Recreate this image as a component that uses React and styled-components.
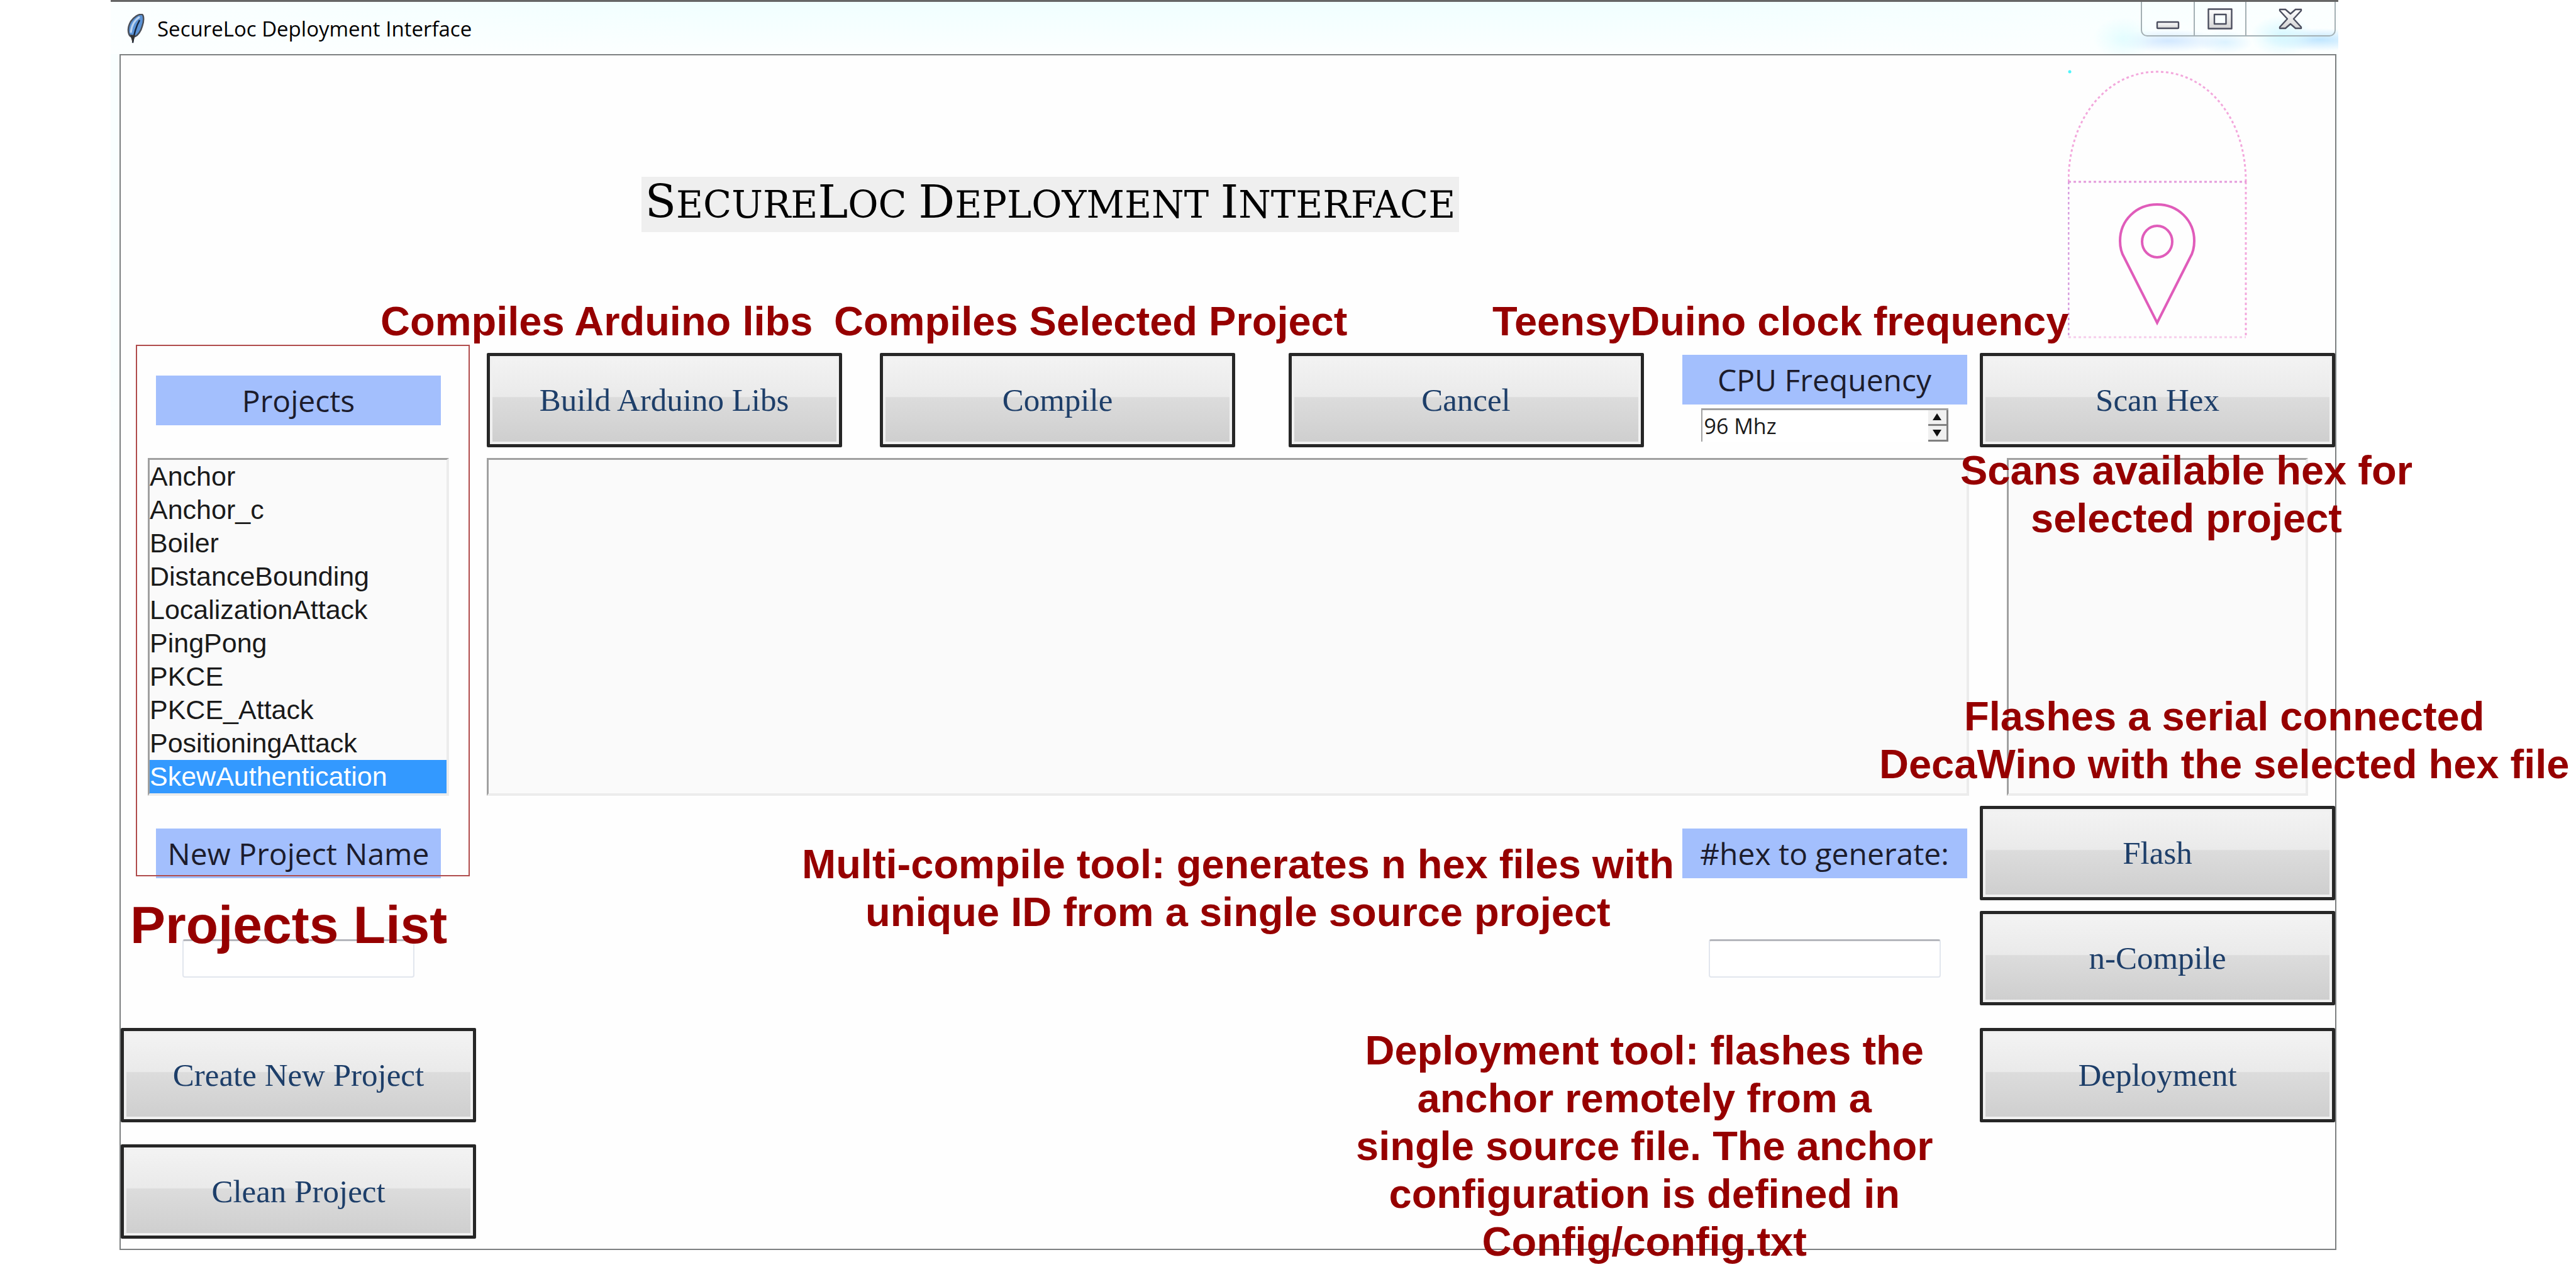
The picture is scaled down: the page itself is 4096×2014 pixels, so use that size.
import React, { useState } from "react";
import styled, { createGlobalStyle } from "styled-components";

const GlobalStyle = createGlobalStyle`
  *, *::before, *::after { box-sizing: border-box; }
  body { margin: 0; background: #fff; font-family: "Liberation Sans", Arial, sans-serif; }
  button, input, select, textarea { margin: 0; font: inherit; }
`;

const Page = styled.main`
  min-height: 100vh;
  padding: 0 378px 0 176px;
`;

const Window = styled.section`
  padding: 0 3px 0 14px;
  border-top: 3px solid #666;
  background: linear-gradient(to bottom, #f9ffff 0, #f9ffff 560px, #fff 860px);
`;

const TitleBar = styled.header`
  display: flex;
  align-items: flex-start;
  justify-content: space-between;
  height: 83px;
  margin: 0 -3px 0 -14px;
  padding: 0 4px 0 26px;
  background:
    radial-gradient(ellipse 48px 34px at calc(100% - 342px) 58px, #e4fdff 0, transparent 100%),
    radial-gradient(ellipse 90px 18px at calc(100% - 270px) 62px, #d2e8ff 0, transparent 100%),
    radial-gradient(ellipse 44px 18px at calc(100% - 180px) 64px, #dcf2ff 0, transparent 100%),
    radial-gradient(ellipse 50px 32px at calc(100% - 90px) 54px, #d6f8ff 0, transparent 100%),
    radial-gradient(ellipse 90px 18px at calc(100% - 30px) 60px, #c0e6ff 0, transparent 100%),
    linear-gradient(to bottom, transparent 0, #fcffff 100%),
    linear-gradient(to right, #fbffff 0, #f0ffff 26%, #f0ffff 70%, #fbffff 100%);
`;

const AppName = styled.div`
  display: flex;
  align-items: center;
  gap: 20px;
  padding-top: 18px;
  font: 33px/50px "Open Sans", "Noto Sans", sans-serif;
  color: #000;
`;

const CaptionButtons = styled.div`
  display: flex;
  height: 55px;
  border: 2px solid #a4b0b4;
  border-top: 0;
  border-radius: 0 0 10px 10px;
`;

const CaptionButton = styled.button`
  display: flex;
  align-items: center;
  justify-content: center;
  width: ${(p) => p.$width}px;
  padding: 0;
  border: 0;
  background: transparent;

  & + & { border-left: 2px solid #a4b0b4; }
`;

const Client = styled.div`
  display: grid;
  grid-template-columns: 565px 598fr 653fr 646fr 494fr 565px;
  grid-template-rows: 473px 150px 570px 150px 184px 188px 182px;
  border: 2px solid #7c7f80;
  background: #fefefe;
`;

const Cell = styled.div`
  position: relative;
  grid-column: ${(p) => p.$col};
  grid-row: ${(p) => p.$row};
  display: flex;
  flex-direction: column;
  align-items: center;
  justify-content: ${(p) => p.$justify || "center"};
  padding: ${(p) => p.$pad || "0"};
`;

const Title = styled.h1`
  margin: 0;
  padding: 0 6px;
  background: #efefef;
  color: #000;
  font: 400 59px/86px "DejaVu Serif", serif;
  text-transform: uppercase;
  white-space: nowrap;
`;

const Initial = styled.span`
  font-size: 72px;
  line-height: 80px;
`;

const ToolButton = styled.button`
  width: 565px;
  height: 150px;
  padding: 0;
  border: 5px solid #262626;
  border-radius: 2px;
  background: linear-gradient(to bottom, #f3f3f3 0, #eaeaea 46%, #dcdcdc 47%, #cecece 100%);
  box-shadow: inset 0 0 0 4px #f0f0f0;
  color: #1d3e69;
  font: 51px/60px "Liberation Serif", "Times New Roman", serif;
`;

const Caption = styled.label`
  display: block;
  width: 453px;
  height: 79px;
  background: #a3bffd;
  color: #1c1c2c;
  font: 400 48px/79px "Open Sans", "Noto Sans", sans-serif;
  text-align: center;
  white-space: nowrap;
`;

const sunken = `
  border: 4px solid;
  border-color: #a0a0a0 #ececec #ececec #a0a0a0;
  border-top-width: 3px;
  border-left-width: 3px;
  border-radius: 0;
  background: #fafafa;
  outline: 0;
`;

const ListBox = styled.select`
  appearance: none;
  width: 479px;
  height: 537px;
  padding: 0;
  overflow: hidden;
  ${sunken}
  color: #1a1a1a;
  font-size: 43px;
  line-height: 51px;

  option {
    height: 53px;
    min-height: 53px;
    padding: 2px 0 0;
    line-height: 51px;
  }
  option:checked {
    background: #3399ff linear-gradient(#3399ff, #3399ff);
    color: #fff;
    -webkit-text-fill-color: #fff;
  }
`;

const Output = styled.textarea`
  width: 100%;
  height: 537px;
  padding: 8px;
  resize: none;
  ${sunken}
`;

const Entry = styled.input`
  width: 369px;
  height: 61px;
  padding: 0 8px;
  border: 2px solid #e2e6ee;
  border-top: 3px solid #b4b6bc;
  border-radius: 4px;
  background: #fff;
  outline: 0;
  font-size: 36px;
`;

const SpinBox = styled.div`
  display: flex;
  width: 393px;
  height: 53px;
  margin-top: 6px;
  border-top: 3px solid #a0a0a0;
  border-left: 2px solid #a0a0a0;
  background: #fff;
`;

const SpinInput = styled.input`
  flex: 1;
  min-width: 0;
  padding: 0 0 0 3px;
  border: 0;
  outline: 0;
  background: transparent;
  color: #1a1a1a;
  font: 34px/50px "Open Sans", "Noto Sans", sans-serif;
`;

const SpinArrows = styled.div`
  display: grid;
  grid-template-rows: 25px 25px;
  width: 32px;
`;

const SpinArrow = styled.button`
  display: flex;
  align-items: center;
  justify-content: center;
  padding: 0;
  border: 0;
  border-right: 3px solid #808080;
  border-bottom: 3px solid #808080;
  background: #f0f0f0;
`;

const Note = styled.p`
  position: absolute;
  z-index: 1;
  left: ${(p) => p.$left}px;
  top: ${(p) => p.$top}px;
  width: max-content;
  margin: 0;
  color: #960000;
  font-weight: 700;
  font-size: ${(p) => (p.$large ? 84 : 65)}px;
  line-height: ${(p) => (p.$large ? 100 : 76)}px;
  text-align: center;
  white-space: pre-line;
  pointer-events: none;
`;

const Highlight = styled.div`
  position: absolute;
  z-index: 1;
  left: 24px;
  top: -13px;
  width: 531px;
  height: 845px;
  border: 2px solid #b04c4c;
  pointer-events: none;
`;

const Feather = () => (
  <svg width="28" height="48" viewBox="0 0 28 48" aria-hidden="true">
    <path d="M24 1 C27 3 27 12 24 20 C22 28 17 34 13 36 C9 38 5 37 3 32 C1 26 2 19 6 12 C11 5 18 0 24 1Z" fill="#5b93d6" stroke="#4a4f58" strokeWidth="2.5" />
    <path d="M20 5 C12 10 7 19 6 30" fill="none" stroke="#bcd3ee" strokeWidth="3" />
    <path d="M20 10 C16 17 12 25 9 46" fill="none" stroke="#16263f" strokeWidth="2.5" />
    <path d="M5 33 L9 47 L13 34Z" fill="#333" />
  </svg>
);

const glyph = { fill: "url(#glyphFill)", stroke: "#4b4e5e", strokeWidth: 2.4, strokeLinejoin: "round" };

const GlyphFill = () => (
  <defs>
    <linearGradient id="glyphFill" x1="0" y1="0" x2="0" y2="1">
      <stop offset="0" stopColor="#fff" />
      <stop offset="1" stopColor="#d4d4d4" />
    </linearGradient>
  </defs>
);

const MinimizeGlyph = () => (
  <svg width="38" height="34" viewBox="0 0 38 34" aria-hidden="true">
    <GlyphFill />
    <rect x="2" y="22" width="34" height="10" rx="1" {...glyph} />
  </svg>
);

const MaximizeGlyph = () => (
  <svg width="40" height="34" viewBox="0 0 40 34" aria-hidden="true">
    <GlyphFill />
    <path fillRule="evenodd" d="M1.5 1.5H38.5V32.5H1.5Z M11 10V25H29.500V10Z" {...glyph} />
  </svg>
);

const CloseGlyph = () => (
  <svg width="38" height="34" viewBox="0 0 38 34" aria-hidden="true">
    <GlyphFill />
    <path d="M2 2H11L19 9L27 2H36V4L24 17L36 30V32H27L19 25L11 32H2V30L14 17L2 4Z" {...glyph} />
  </svg>
);

const Logo = () => (
  <svg width="286" height="428" viewBox="0 0 286 428" fill="none" role="img" aria-label="SecureLoc logo">
    <g stroke="#f3a8dc" strokeWidth="3" strokeDasharray="4 4">
      <path d="M1 178 C1 74 65 3 142 3 C219 3 283 74 283 178" />
      <path d="M283 178V425" />
      <path d="M1 425H283" stroke="#f6cdea" />
      <path d="M1 178V425" stroke="#d8a0e0" />
      <path d="M1 178H283" stroke="#e49adb" />
    </g>
    <circle cx="3" cy="3" r="2.500" fill="#4ff4fb" />
    <g stroke="#e05cba" strokeWidth="4">
      <path d="M142 402 L90 299 C85 291 83 283 83 272 C83 239 109 214 142 214 C175 214 201 239 201 272 C201 283 199 291 194 299 Z" />
      <ellipse cx="142" cy="273" rx="24" ry="25" />
    </g>
  </svg>
);

const Arrow = ({ down }) => (
  <svg width="16" height="12" viewBox="0 0 16 12" aria-hidden="true">
    <path d={down ? "M1 1H15L8 12Z" : "M1 11H15L8 0Z"} fill="#111" />
  </svg>
);

const PROJECTS = [
  "Anchor",
  "Anchor_c",
  "Boiler",
  "DistanceBounding",
  "LocalizationAttack",
  "PingPong",
  "PKCE",
  "PKCE_Attack",
  "PositioningAttack",
  "SkewAuthentication",
];

const FREQUENCIES = [24, 48, 72, 96, 120];

export default function App() {
  const [project, setProject] = useState("SkewAuthentication");
  const [freq, setFreq] = useState(3);
  const step = (d) => setFreq((f) => Math.min(FREQUENCIES.length - 1, Math.max(0, f + d)));

  return (
    <>
      <GlobalStyle />
      <Page>
        <Window>
          <TitleBar>
            <AppName>
              <Feather />
              SecureLoc Deployment Interface
            </AppName>
            <CaptionButtons>
              <CaptionButton $width={82} aria-label="Minimize"><MinimizeGlyph /></CaptionButton>
              <CaptionButton $width={82} aria-label="Maximize"><MaximizeGlyph /></CaptionButton>
              <CaptionButton $width={142} aria-label="Close"><CloseGlyph /></CaptionButton>
            </CaptionButtons>
          </TitleBar>

          <Client>
            <Cell $col="1 / 6" $row="1">
              <Title>
                <Initial>S</Initial>ecure<Initial>L</Initial>oc <Initial>D</Initial>eployment <Initial>I</Initial>nterface
              </Title>
            </Cell>
            <Cell $col="6" $row="1"><Logo /></Cell>

            <Cell $col="1" $row="2">
              <Caption htmlFor="projects">Projects</Caption>
              <Highlight />
            </Cell>
            <Cell $col="2" $row="2">
              <ToolButton>Build Arduino Libs</ToolButton>
              <Note $left={-152} $top={-88}>Compiles Arduino libs</Note>
            </Cell>
            <Cell $col="3" $row="2">
              <ToolButton>Compile</ToolButton>
              <Note $left={-29} $top={-88}>Compiles Selected Project</Note>
            </Cell>
            <Cell $col="4" $row="2"><ToolButton>Cancel</ToolButton></Cell>
            <Cell $col="5" $row="2" $justify="flex-start" $pad="3px 0 0">
              <Caption htmlFor="frequency">CPU Frequency</Caption>
              <SpinBox>
                <SpinInput id="frequency" readOnly value={`${FREQUENCIES[freq]} Mhz`} />
                <SpinArrows>
                  <SpinArrow aria-label="Increase frequency" onClick={() => step(1)}><Arrow /></SpinArrow>
                  <SpinArrow aria-label="Decrease frequency" onClick={() => step(-1)}><Arrow down /></SpinArrow>
                </SpinArrows>
              </SpinBox>
              <Note $left={-281} $top={-88}>TeensyDuino clock frequency</Note>
            </Cell>
            <Cell $col="6" $row="2"><ToolButton>Scan Hex</ToolButton></Cell>

            <Cell $col="1" $row="3">
              <ListBox id="projects" size={10} value={project} onChange={(e) => setProject(e.target.value)}>
                {PROJECTS.map((name) => (
                  <option key={name} value={name}>{name}</option>
                ))}
              </ListBox>
            </Cell>
            <Cell $col="2 / 6" $row="3" $pad="0 17px">
              <Output readOnly aria-label="Compiler output" />
            </Cell>
            <Cell $col="6" $row="3">
              <ListBox size={10} aria-label="Available hex files" />
              <Note $left={-31} $top={-1}>{"Scans available hex for\nselected project"}</Note>
              <Note $left={-160} $top={390}>{"Flashes a serial connected\nDecaWino with the selected hex file"}</Note>
            </Cell>

            <Cell $col="1" $row="4"><Caption htmlFor="new-project">New Project Name</Caption></Cell>
            <Cell $col="2 / 5" $row="4">
              <Note $left={518} $top={55}>{"Multi-compile tool: generates n hex files with\nunique ID from a single source project"}</Note>
            </Cell>
            <Cell $col="5" $row="4"><Caption htmlFor="hex-count">#hex to generate:</Caption></Cell>
            <Cell $col="6" $row="4"><ToolButton>Flash</ToolButton></Cell>

            <Cell $col="1" $row="5">
              <Entry id="new-project" />
              <Note $large $left={15} $top={-11}>Projects List</Note>
            </Cell>
            <Cell $col="5" $row="5"><Entry id="hex-count" /></Cell>
            <Cell $col="6" $row="5"><ToolButton>n-Compile</ToolButton></Cell>

            <Cell $col="1" $row="6"><ToolButton>Create New Project</ToolButton></Cell>
            <Cell $col="2 / 6" $row="6">
              <Note $left={1399} $top={17}>
                {"Deployment tool: flashes the\nanchor remotely from a\nsingle source file. The anchor\nconfiguration is defined in\nConfig/config.txt"}
              </Note>
            </Cell>
            <Cell $col="6" $row="6"><ToolButton>Deployment</ToolButton></Cell>

            <Cell $col="1" $row="7"><ToolButton>Clean Project</ToolButton></Cell>
          </Client>
        </Window>
      </Page>
    </>
  );
}
